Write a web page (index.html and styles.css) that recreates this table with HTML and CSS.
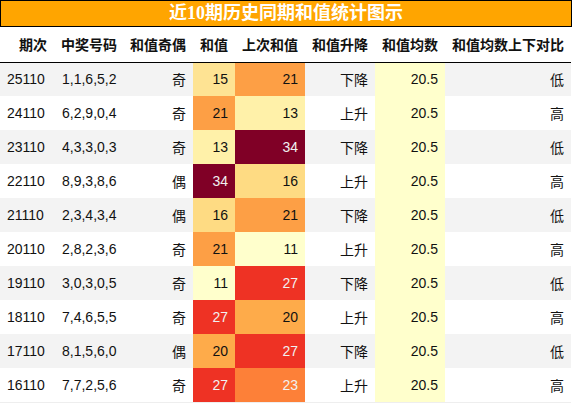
FILE: index.html
```html
<!DOCTYPE html>
<html lang="zh">
<head>
<meta charset="utf-8">
<title>近10期历史同期和值统计图示</title>
<link rel="stylesheet" href="styles.css">
</head>
<body>
<div class="title">近10期历史同期和值统计图示</div>
<table class="stats">
  <colgroup>
    <col class="c1"><col class="c2"><col class="c3"><col class="c4"><col class="c5"><col class="c6"><col class="c7"><col class="c8">
  </colgroup>
  <thead>
    <tr>
      <th>期次</th><th>中奖号码</th><th>和值奇偶</th><th>和值</th><th>上次和值</th><th>和值升降</th><th>和值均数</th><th>和值均数上下对比</th>
    </tr>
  </thead>
  <tbody>
    <tr class="odd"><td class="l">25110</td><td class="l">1,1,6,5,2</td><td>奇</td><td class="v15">15</td><td class="v21">21</td><td>下降</td><td class="avg">20.5</td><td>低</td></tr>
    <tr><td class="l">24110</td><td class="l">6,2,9,0,4</td><td>奇</td><td class="v21">21</td><td class="v13">13</td><td>上升</td><td class="avg">20.5</td><td>高</td></tr>
    <tr class="odd"><td class="l">23110</td><td class="l">4,3,3,0,3</td><td>奇</td><td class="v13">13</td><td class="v34">34</td><td>下降</td><td class="avg">20.5</td><td>低</td></tr>
    <tr><td class="l">22110</td><td class="l">8,9,3,8,6</td><td>偶</td><td class="v34">34</td><td class="v16">16</td><td>上升</td><td class="avg">20.5</td><td>高</td></tr>
    <tr class="odd"><td class="l">21110</td><td class="l">2,3,4,3,4</td><td>偶</td><td class="v16">16</td><td class="v21">21</td><td>下降</td><td class="avg">20.5</td><td>低</td></tr>
    <tr><td class="l">20110</td><td class="l">2,8,2,3,6</td><td>奇</td><td class="v21">21</td><td class="v11">11</td><td>上升</td><td class="avg">20.5</td><td>高</td></tr>
    <tr class="odd"><td class="l">19110</td><td class="l">3,0,3,0,5</td><td>奇</td><td class="v11">11</td><td class="v27">27</td><td>下降</td><td class="avg">20.5</td><td>低</td></tr>
    <tr><td class="l">18110</td><td class="l">7,4,6,5,5</td><td>奇</td><td class="v27">27</td><td class="v20">20</td><td>上升</td><td class="avg">20.5</td><td>高</td></tr>
    <tr class="odd"><td class="l">17110</td><td class="l">8,1,5,6,0</td><td>偶</td><td class="v20">20</td><td class="v27">27</td><td>下降</td><td class="avg">20.5</td><td>低</td></tr>
    <tr><td class="l">16110</td><td class="l">7,7,2,5,6</td><td>奇</td><td class="v27">27</td><td class="v23">23</td><td>上升</td><td class="avg">20.5</td><td>高</td></tr>
  </tbody>
</table>
</body>
</html>
```
FILE: styles.css
```css
html, body {
  margin: 0;
  padding: 0;
  background: #ffffff;
}
body {
  font-family: "Liberation Sans", "Noto Sans CJK SC", sans-serif;
  font-size: 14px;
  color: #111111;
}
.title {
  box-sizing: border-box;
  width: 572px;
  height: 27px;
  background: #ffa500;
  border: 1px solid #000000;
  color: #ffffff;
  font-family: "Liberation Serif", "Noto Sans CJK SC", serif;
  font-weight: bold;
  font-size: 18px;
  line-height: 24px;
  text-align: center;
}
.stats {
  width: 571px;
  border-collapse: collapse;
  table-layout: fixed;
  border-spacing: 0;
}
.c1 { width: 54px; }
.c2 { width: 69px; }
.c3 { width: 70px; }
.c4 { width: 42px; }
.c5 { width: 70px; }
.c6 { width: 70px; }
.c7 { width: 70px; }
.c8 { width: 126px; }
.stats th {
  height: 35px;
  padding: 0 7px;
  text-align: right;
  font-weight: bold;
  font-size: 14px;
  color: #111111;
  border-bottom: 1px solid #000000;
  white-space: nowrap;
  box-sizing: border-box;
}
.stats td {
  height: 34px;
  padding: 0 7px;
  text-align: right;
  white-space: nowrap;
  box-sizing: border-box;
}
.stats td.l { text-align: left; padding-left: 7px; }
.stats td.l + td.l { padding-left: 8px; }
.stats tbody tr.odd { background: #f3f3f3; }
.stats tbody tr:last-child td { border-bottom: 1px solid #eeeeee; }
.stats td.avg { background: #ffffcc; }
.v11 { background: #ffffcc; }
.v13 { background: #fff1a9; }
.v15 { background: #fee393; }
.v16 { background: #fedb83; }
.v20 { background: #feab4a; }
.v21 { background: #fd9f45; }
.v23 { background: #fd8038; color: #f1f1f1; }
.v27 { background: #ee3224; color: #f1f1f1; }
.v34 { background: #800026; color: #f1f1f1; }
```
